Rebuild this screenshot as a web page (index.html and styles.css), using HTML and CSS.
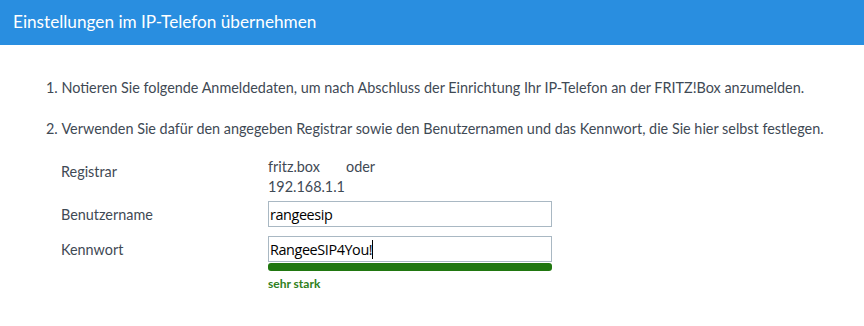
FILE: index.html
```html
<!DOCTYPE html>
<html lang="de">
<head>
    <meta charset="UTF-8">
    <title>Einstellungen im IP-Telefon übernehmen</title>
    <link rel="stylesheet" href="styles.css">
</head>
<body>

    <div class="page-head">Einstellungen im IP-Telefon übernehmen</div>

    <div class="content">
        <ol class="steps">
            <li>Notieren Sie folgende Anmeldedaten, um nach Abschluss der Einrichtung Ihr IP-Telefon an der FRITZ!Box anzumelden.</li>
            <li>Verwenden Sie dafür den angegeben Registrar sowie den Benutzernamen und das Kennwort, die Sie hier selbst festlegen.</li>
        </ol>

        <div class="form">
            <div class="row registrar">
                <label>Registrar</label>
                <div class="value">
                    <span class="host">fritz.box</span><span>oder</span><br>
                    192.168.1.1
                </div>
            </div>
            <div class="row">
                <label for="user">Benutzername</label>
                <div class="value">
                    <input type="text" id="user" value="rangeesip">
                </div>
            </div>
            <div class="row">
                <label for="pass">Kennwort</label>
                <div class="value">
                    <div class="field">
                        <input type="text" id="pass" value="RangeeSIP4You!">
                        <span class="caret"></span>
                    </div>
                    <div class="strength"></div>
                    <div class="strength-text">sehr stark</div>
                </div>
            </div>
        </div>
    </div>

</body>
</html>
```

FILE: styles.css
```css
body {
    margin: 0;
    font-family: Lato, "Open Sans", sans-serif;
    font-size: 14.4px;
    color: #3f4a55;
    background-color: #fff;
}
.page-head {
    height: 45px;
    line-height: 44px;
    padding-left: 13px;
    background-color: #298ee0;
    color: #fff;
    font-size: 17.2px;
}
.content {
    padding: 32px 0 0 0;
}
.steps {
    margin: 0;
    padding-left: 46px;
    list-style-position: inside;
}
.steps li {
    line-height: 22px;
    margin-bottom: 19px;
}
.form {
    padding-left: 61px;
    margin-top: -2px;
}
.row {
    display: flex;
    margin-bottom: 9px;
}
.row.registrar {
    margin-bottom: 4px;
}
.row label {
    width: 207px;
    flex-shrink: 0;
    padding-top: 5px;
}
.registrar label {
    padding-top: 6px;
}
.registrar .value {
    line-height: 20px;
}
.host {
    display: inline-block;
    width: 78px;
}
.field {
    position: relative;
}
.value input {
    display: block;
    width: 284px;
    height: 26px;
    box-sizing: border-box;
    margin: 0;
    padding: 0 1px;
    border: 1px solid #a9b8c3;
    font-family: "Open Sans", sans-serif;
    font-size: 14.4px;
    letter-spacing: -0.4px;
    color: #000;
    outline: none;
}
/* Schreibmarke am Ende des Kennworts */
.caret {
    position: absolute;
    left: 104px;
    top: 4px;
    width: 1px;
    height: 19px;
    background-color: #000;
}
.strength {
    width: 284px;
    height: 8px;
    margin-top: 1px;
    border-radius: 3px;
    background-color: #207710;
}
.strength-text {
    margin-top: 5px;
    font-size: 12px;
    font-weight: bold;
    color: #2f8020;
}
```
